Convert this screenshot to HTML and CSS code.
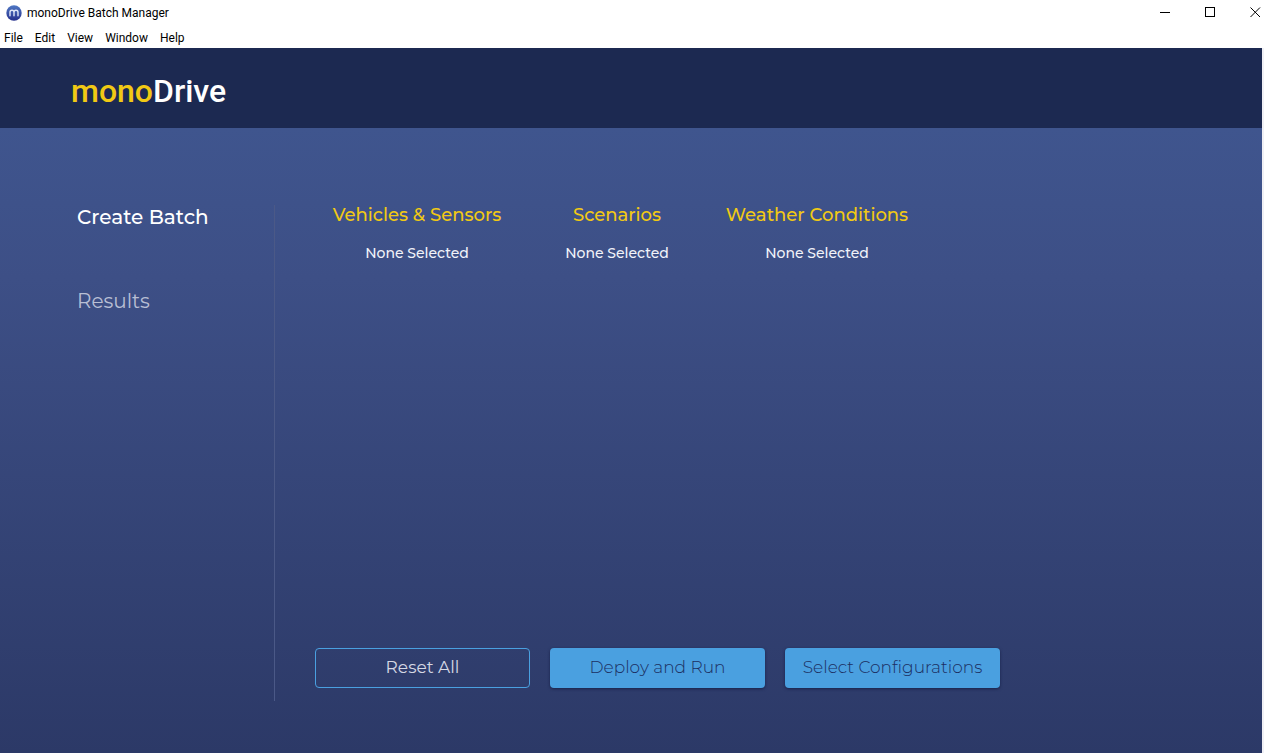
FILE: index.html
```html
<!DOCTYPE html>
<html lang="en">
<head>
<meta charset="utf-8">
<title>monoDrive Batch Manager</title>
<link rel="stylesheet" href="styles.css">
</head>
<body>
<div class="window">
  <div class="titlebar">
    <svg class="app-icon" viewBox="0 0 16 16" aria-hidden="true">
      <defs><linearGradient id="disc" x1="0" y1="0" x2="0" y2="1"><stop offset="0" stop-color="#4f78c4"/><stop offset="1" stop-color="#26308c"/></linearGradient></defs>
      <circle cx="8" cy="8" r="7.7" fill="url(#disc)"/>
      <path d="M4 10.8V7.3a2 2 0 0 1 4 0v3.5M8 7.3a2 2 0 0 1 4 0v3.5" fill="none" stroke="#dfe6f8" stroke-width="1.4" stroke-linecap="round"/>
    </svg>
    <span class="title">monoDrive Batch Manager</span>
    <div class="controls">
      <button class="control" aria-label="Minimize"><svg viewBox="0 0 11 11" shape-rendering="crispEdges"><path d="M0 5.5h10"/></svg></button>
      <button class="control" aria-label="Maximize"><svg viewBox="0 0 11 11" shape-rendering="crispEdges"><path d="M.5.5h9v9h-9z"/></svg></button>
      <button class="control" aria-label="Close"><svg viewBox="0 0 11 11"><path d="M.5.5l9.5 9.5M10 .5l-9.5 9.5"/></svg></button>
    </div>
  </div>
  <nav class="menubar" aria-label="Menu">
    <button class="menu">File</button>
    <button class="menu">Edit</button>
    <button class="menu">View</button>
    <button class="menu">Window</button>
    <button class="menu">Help</button>
  </nav>
  <div class="app">
    <header class="header"><a class="logo" href="#"><span class="logo-mono">mono</span>Drive</a></header>
    <main class="main">
      <nav class="sidebar" aria-label="Sections">
        <a class="link link-active" href="#create">Create Batch</a>
        <a class="link" href="#results">Results</a>
      </nav>
      <div class="content">
        <div class="columns">
          <section class="column"><h2 class="heading">Vehicles &amp; Sensors</h2><p class="value">None Selected</p></section>
          <section class="column"><h2 class="heading">Scenarios</h2><p class="value">None Selected</p></section>
          <section class="column"><h2 class="heading">Weather Conditions</h2><p class="value">None Selected</p></section>
        </div>
        <div class="actions">
          <button class="btn btn-outline">Reset All</button>
          <button class="btn btn-solid">Deploy and Run</button>
          <button class="btn btn-solid">Select Configurations</button>
        </div>
      </div>
    </main>
  </div>
</div>
</body>
</html>
```
FILE: styles.css
```css
* { box-sizing: border-box; }
body { margin: 0; background: #fff; font-family: Montserrat, Inter, sans-serif; }
button { margin: 0; padding: 0; border: 0; background: none; font: inherit; color: inherit; }
a { text-decoration: none; color: inherit; }

.window { display: flex; flex-direction: column; min-height: 100vh; color: #000; }
.titlebar { display: flex; align-items: center; height: 25px; padding-left: 6px; font: 12px/24px "Segoe UI", Roboto, sans-serif; }
.app-icon { width: 16px; height: 16px; margin-right: 5px; }
.title { flex: 1; }
.controls { display: flex; gap: 34px; padding-right: 3px; }
.control { display: flex; }
.control svg { width: 11px; height: 11px; fill: none; stroke: #000; stroke-width: 1; }
.menubar { display: flex; gap: 12px; height: 23px; padding: 1px 4px 0; font: 12px/24px "Segoe UI", Roboto, sans-serif; }

.app { display: flex; flex: 1; flex-direction: column; border-right: 2px solid #f0f0f5; }
.header { display: flex; align-items: center; height: 80px; padding: 6px 71px 0; background: #1c2951; }
.logo { font: 500 32px/40px Roboto, sans-serif; color: #fff; }
.logo-mono { color: #f1c914; }
.main { display: flex; flex: 1; padding: 77px 0 52px; background: linear-gradient(#3f558e, #3d4f86 24%, #2c3967); }

.sidebar { display: flex; flex-direction: column; gap: 60px; width: 275px; padding-left: 77px; border-right: 1px solid #4b5987; }
.link { font-size: 20px; line-height: 24px; color: #b9bfd4; }
.link-active { font-weight: 500; color: #fff; }

.content { display: flex; flex: 1; flex-direction: column; justify-content: space-between; padding: 0 40px 13px 42px; }
.columns { display: flex; }
.column { width: 200px; text-align: center; }
.heading { margin: 0 0 18px; font-size: 18px; font-weight: 500; line-height: 20px; color: #f1c914; }
.value { margin: 0; font-size: 14px; font-weight: 500; line-height: 20px; color: #f1f3f9; }
.actions { display: flex; gap: 20px; margin-left: -2px; }
.btn { width: 215px; height: 40px; padding-bottom: 2px; border-radius: 4px; font-size: 17px; line-height: 20px; }
.btn-outline { border: 1px solid #4aa0e0; color: #d5d8e4; }
.btn-solid { background: #4aa0e0; color: #1c2f62; font-weight: 300; box-shadow: 0 1px 3px #18224a; }
```
